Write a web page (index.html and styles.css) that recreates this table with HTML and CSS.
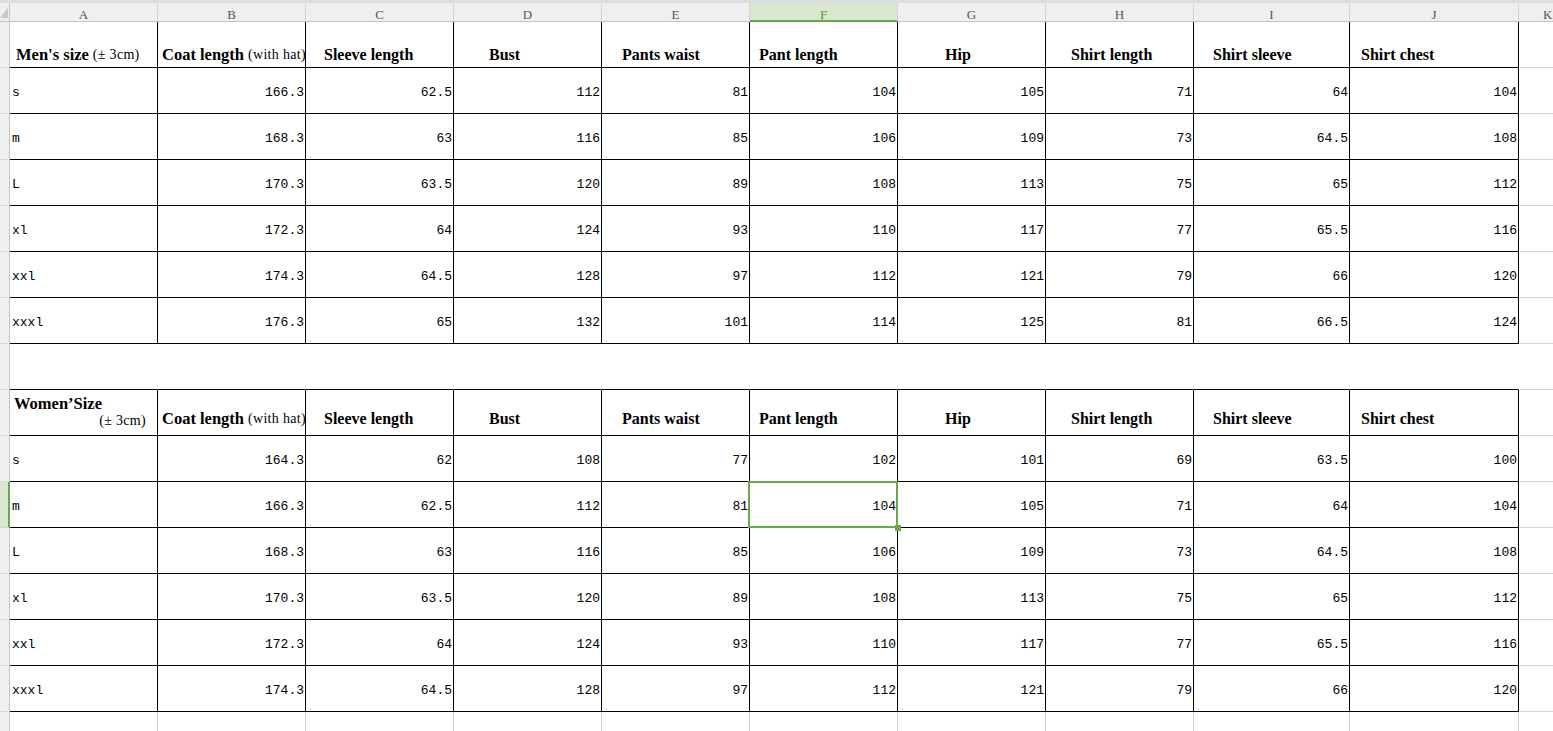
FILE: index.html
```html
<!DOCTYPE html>
<html>
<head>
<meta charset="utf-8">
<title>Size chart</title>
<link rel="stylesheet" href="styles.css">
</head>
<body>
<div class="sheet">
  <div class="strip"></div>

  <div class="corner"><svg width="8" height="11" viewBox="0 0 8 11"><polygon points="0,11 8,11 8,0" fill="#c9c9c9"/></svg></div>
  <div class="ch">A</div><div class="ch">B</div><div class="ch">C</div><div class="ch">D</div><div class="ch">E</div>
  <div class="ch ch-sel">F</div><div class="ch">G</div><div class="ch">H</div><div class="ch">I</div><div class="ch">J</div><div class="ch ch-k">K</div>

  <!-- Men's header -->
  <div class="rh"></div>
  <div class="c hd in-a"><span class="b">Men's size</span>&nbsp;<span class="sm">(± 3cm)</span></div>
  <div class="c hd in-b"><span class="b">Coat length</span>&nbsp;<span class="sm">(with hat)</span></div>
  <div class="c hd in-c">Sleeve length</div>
  <div class="c hd in-d">Bust</div>
  <div class="c hd in-e">Pants waist</div>
  <div class="c hd in-f">Pant length</div>
  <div class="c hd in-g">Hip</div>
  <div class="c hd in-h">Shirt length</div>
  <div class="c hd in-i">Shirt sleeve</div>
  <div class="c hd in-j">Shirt chest</div>
  <div class="k"></div>

  <div class="rh"></div><div class="c lbl">s</div>
  <div class="c num">166.3</div><div class="c num">62.5</div><div class="c num">112</div><div class="c num">81</div><div class="c num">104</div><div class="c num">105</div><div class="c num">71</div><div class="c num">64</div><div class="c num">104</div><div class="k"></div>

  <div class="rh"></div><div class="c lbl">m</div>
  <div class="c num">168.3</div><div class="c num">63</div><div class="c num">116</div><div class="c num">85</div><div class="c num">106</div><div class="c num">109</div><div class="c num">73</div><div class="c num">64.5</div><div class="c num">108</div><div class="k"></div>

  <div class="rh"></div><div class="c lbl">L</div>
  <div class="c num">170.3</div><div class="c num">63.5</div><div class="c num">120</div><div class="c num">89</div><div class="c num">108</div><div class="c num">113</div><div class="c num">75</div><div class="c num">65</div><div class="c num">112</div><div class="k"></div>

  <div class="rh"></div><div class="c lbl">xl</div>
  <div class="c num">172.3</div><div class="c num">64</div><div class="c num">124</div><div class="c num">93</div><div class="c num">110</div><div class="c num">117</div><div class="c num">77</div><div class="c num">65.5</div><div class="c num">116</div><div class="k"></div>

  <div class="rh"></div><div class="c lbl">xxl</div>
  <div class="c num">174.3</div><div class="c num">64.5</div><div class="c num">128</div><div class="c num">97</div><div class="c num">112</div><div class="c num">121</div><div class="c num">79</div><div class="c num">66</div><div class="c num">120</div><div class="k"></div>

  <div class="rh"></div><div class="c lbl">xxxl</div>
  <div class="c num">176.3</div><div class="c num">65</div><div class="c num">132</div><div class="c num">101</div><div class="c num">114</div><div class="c num">125</div><div class="c num">81</div><div class="c num">66.5</div><div class="c num">124</div><div class="k"></div>

  <!-- blank row -->
  <div class="rh"></div>
  <div class="blank"></div><div class="blank"></div><div class="blank"></div><div class="blank"></div><div class="blank"></div><div class="blank"></div><div class="blank"></div><div class="blank"></div><div class="blank"></div><div class="blank"></div>
  <div class="k"></div>

  <!-- Women's header -->
  <div class="rh"></div>
  <div class="c hd hd-w hd-two in-w"><span class="b">Women’Size</span><span class="sm two-r">(± 3cm)</span></div>
  <div class="c hd hd-w in-b"><span class="b">Coat length</span>&nbsp;<span class="sm">(with hat)</span></div>
  <div class="c hd hd-w in-c">Sleeve length</div>
  <div class="c hd hd-w in-d">Bust</div>
  <div class="c hd hd-w in-e">Pants waist</div>
  <div class="c hd hd-w in-f">Pant length</div>
  <div class="c hd hd-w in-g">Hip</div>
  <div class="c hd hd-w in-h">Shirt length</div>
  <div class="c hd hd-w in-i">Shirt sleeve</div>
  <div class="c hd hd-w in-j">Shirt chest</div>
  <div class="k"></div>

  <div class="rh"></div><div class="c lbl">s</div>
  <div class="c num">164.3</div><div class="c num">62</div><div class="c num">108</div><div class="c num">77</div><div class="c num">102</div><div class="c num">101</div><div class="c num">69</div><div class="c num">63.5</div><div class="c num">100</div><div class="k"></div>

  <div class="rh rh-sel"></div><div class="c lbl">m</div>
  <div class="c num">166.3</div><div class="c num">62.5</div><div class="c num">112</div><div class="c num">81</div><div class="c num sel">104</div><div class="c num">105</div><div class="c num">71</div><div class="c num">64</div><div class="c num">104</div><div class="k"></div>

  <div class="rh"></div><div class="c lbl">L</div>
  <div class="c num">168.3</div><div class="c num">63</div><div class="c num">116</div><div class="c num">85</div><div class="c num">106</div><div class="c num">109</div><div class="c num">73</div><div class="c num">64.5</div><div class="c num">108</div><div class="k"></div>

  <div class="rh"></div><div class="c lbl">xl</div>
  <div class="c num">170.3</div><div class="c num">63.5</div><div class="c num">120</div><div class="c num">89</div><div class="c num">108</div><div class="c num">113</div><div class="c num">75</div><div class="c num">65</div><div class="c num">112</div><div class="k"></div>

  <div class="rh"></div><div class="c lbl">xxl</div>
  <div class="c num">172.3</div><div class="c num">64</div><div class="c num">124</div><div class="c num">93</div><div class="c num">110</div><div class="c num">117</div><div class="c num">77</div><div class="c num">65.5</div><div class="c num">116</div><div class="k"></div>

  <div class="rh"></div><div class="c lbl">xxxl</div>
  <div class="c num">174.3</div><div class="c num">64.5</div><div class="c num">128</div><div class="c num">97</div><div class="c num">112</div><div class="c num">121</div><div class="c num">79</div><div class="c num">66</div><div class="c num">120</div><div class="k"></div>

  <!-- empty row below -->
  <div class="rh"></div>
  <div class="e"></div><div class="e"></div><div class="e"></div><div class="e"></div><div class="e"></div><div class="e"></div><div class="e"></div><div class="e"></div><div class="e"></div><div class="e"></div>
  <div class="k"></div>
</div>
</body>
</html>
```

FILE: styles.css
```css
html, body {
  margin: 0;
  padding: 0;
  background: #ffffff;
  overflow: hidden;
}

body {
  font-family: "Liberation Serif", "Times New Roman", serif;
  color: #000;
}

.sheet {
  display: grid;
  grid-template-columns: 10px repeat(8, 148px) 156px 169px 1fr;
  grid-template-rows: 3px 19px repeat(16, 46px);
  width: 1553px;
  height: 731px;
  overflow: hidden;
}

.strip {
  grid-column: 1 / -1;
  background: #dddddd;
}

.corner {
  background: #efefef;
  border-right: 1px solid #c3c3c3;
  border-bottom: 1px solid #c3c3c3;
  display: flex;
  align-items: flex-end;
  padding-bottom: 3px;
  overflow: hidden;
}

.ch {
  background: #efefef;
  border-right: 1px solid #d5d5d5;
  border-bottom: 1px solid #c3c3c3;
  display: flex;
  justify-content: center;
  align-items: flex-start;
  padding-top: 5px;
  font-family: "Liberation Serif", serif;
  font-size: 13px;
  line-height: 14px;
  color: #555;
}

.ch-sel {
  background: #d9e7cf;
  color: #4f9a2c;
  border-bottom: 2px solid #6aa84f;
}

.ch-k {
  border-right: none;
  justify-content: flex-start;
  padding-left: 24px;
  overflow: hidden;
}

.rh {
  background: #efefef;
  border-right: 1px solid #c3c3c3;
  border-bottom: 1px solid #d8d8d8;
}

.rh-sel {
  background: #d9e7cf;
  border-right: 2px solid #6aa84f;
}

.c {
  border-right: 1px solid #000;
  border-bottom: 1px solid #000;
  display: flex;
  align-items: center;
  font-family: "Liberation Mono", monospace;
  font-size: 13px;
  white-space: nowrap;
  overflow: visible;
}

.lbl {
  padding: 3px 0 0 2px;
}

.num {
  justify-content: flex-end;
  padding: 3px 1px 0 0;
}

.hd {
  align-items: flex-end;
  font-family: "Liberation Serif", "Times New Roman", serif;
  font-weight: bold;
  font-size: 16px;
  line-height: 18px;
  padding-bottom: 3px;
}

.hd-w {
  padding-bottom: 7px;
}

.hd .b {
  font-weight: bold;
  font-size: 16.5px;
}

.hd .sm {
  font-weight: normal;
  font-size: 14px;
  letter-spacing: 0.3px;
}

.hd-two {
  flex-direction: column;
  align-items: stretch;
  justify-content: flex-end;
  line-height: 17px;
}

.hd-w.hd-two {
  padding-bottom: 6px;
}

.two-r {
  text-align: right;
  padding-right: 11px;
}

.in-a { padding-left: 6px; }
.in-w { padding-left: 4px; }
.in-b { padding-left: 4px; }
.in-c { padding-left: 18px; }
.in-d { padding-left: 35px; }
.in-e { padding-left: 20px; }
.in-f { padding-left: 9px; }
.in-g { padding-left: 47px; }
.in-h { padding-left: 25px; }
.in-i { padding-left: 19px; }
.in-j { padding-left: 11px; }

.sel {
  position: relative;
}

.sel::after {
  content: "";
  position: absolute;
  left: -2px;
  top: -1px;
  right: -1px;
  bottom: -1px;
  border: 2px solid #6aa84f;
  pointer-events: none;
}

.sel::before {
  content: "";
  position: absolute;
  right: -4px;
  bottom: -4px;
  width: 6px;
  height: 6px;
  background: #6aa84f;
  z-index: 1;
}

.blank {
  border-right: 1px solid transparent;
  border-bottom: 1px solid #000;
}

.k {
  border-bottom: 1px solid #d4d4d4;
}

.e {
  border-right: 1px solid #d0d0d0;
}
```
